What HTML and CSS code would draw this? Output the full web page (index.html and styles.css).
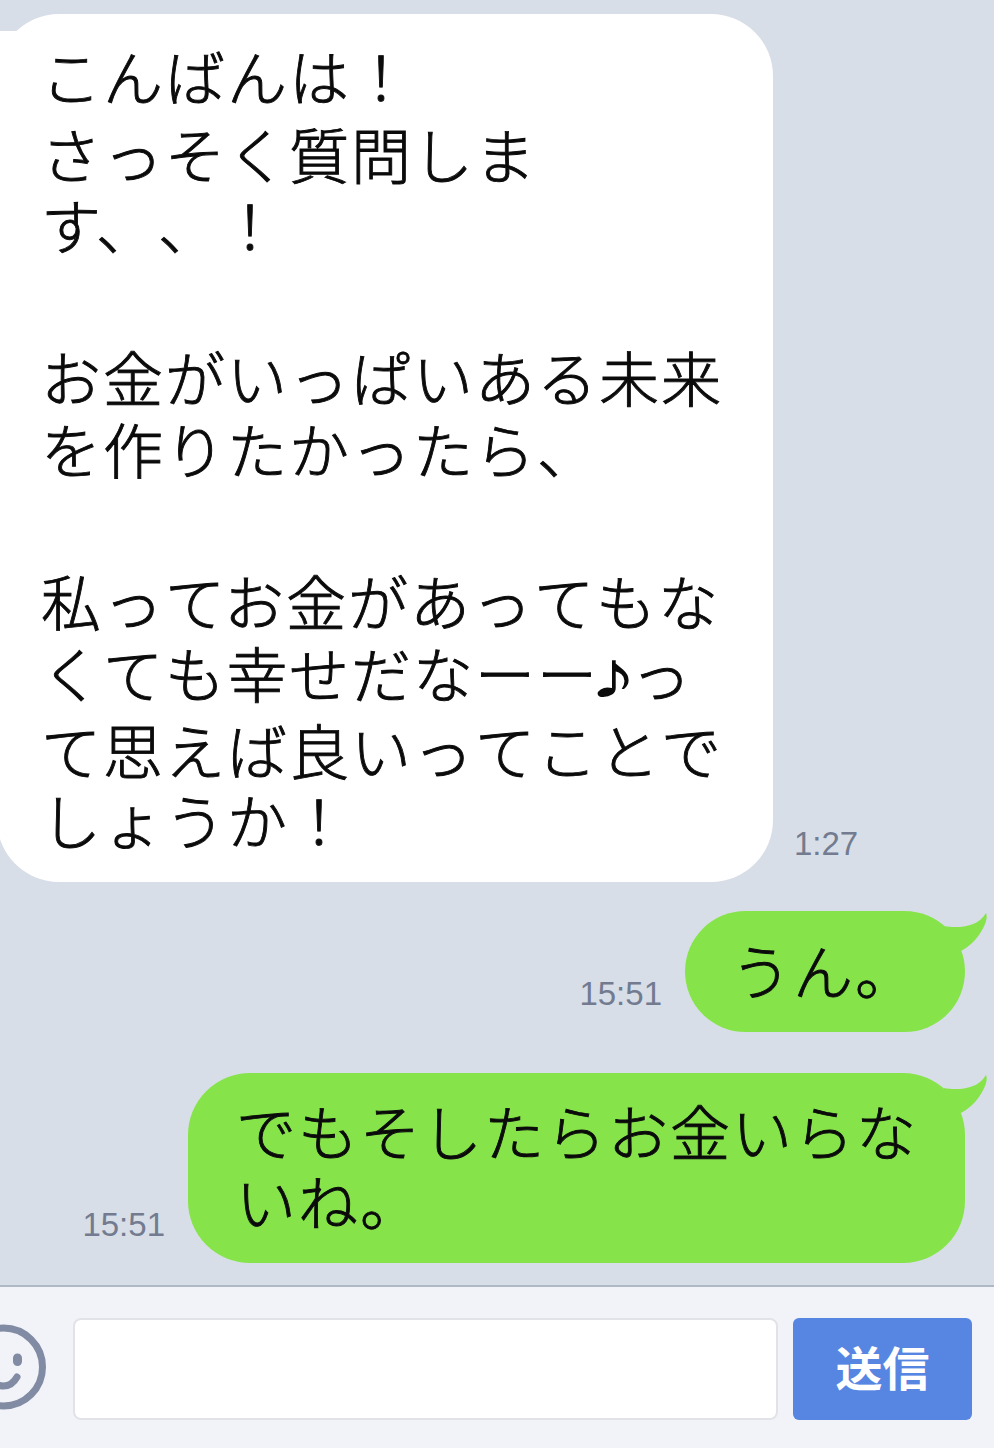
FILE: index.html
```html
<!DOCTYPE html>
<html lang="ja">
<head>
    <meta charset="UTF-8">
    <title>トーク</title>
    <link rel="stylesheet" href="styles.css">
</head>
<body>
<div class="box">
    <div class="talk">
        <div class="row other">
            <div class="bubble white">
                <p>こんばんは！</p>
                <p class="kanji">さっそく質問しま</p>
                <p>す<span class="mark">、、！</span></p>
                <p class="blank"></p>
                <p class="kanji">お金がいっぱいある未来</p>
                <p>を作りたかったら、</p>
                <p class="blank"></p>
                <p class="kanji">私って<span class="near">お金があってもな</span></p>
                <p>くても幸せだなーー<span class="note">♪</span>っ</p>
                <p class="kanji">て思えば良いってことで</p>
                <p class="last">しょうか！</p>
                <svg class="tail-left" width="20" height="60" viewBox="0 0 20 60">
                    <path d="M0 17H17V56H0Z" fill="#fff"/>
                </svg>
            </div>
            <span class="time">1:27</span>
        </div>
        <div class="row mine first">
            <span class="time">15:51</span>
            <div class="bubble green short">
                <p>うん。</p>
                <svg class="tail" width="50" height="46" viewBox="0 0 50 46">
                    <path d="M4 15C14 17 37 18 46 2Q49 9 39 24Q32 34 21 40L6 34Z" fill="#86e44a"/>
                </svg>
            </div>
        </div>
        <div class="row mine second">
            <span class="time">15:51</span>
            <div class="bubble green long">
                <p>でもそしたらお金いらな</p>
                <p>いね。</p>
                <svg class="tail" width="50" height="46" viewBox="0 0 50 46">
                    <path d="M4 15C14 17 37 18 46 2Q49 9 39 24Q32 34 21 40L6 34Z" fill="#86e44a"/>
                </svg>
            </div>
        </div>
    </div>
    <div class="bar">
        <svg class="smile" width="46" height="88" viewBox="0 0 46 88" fill="none" stroke="#828ba4" stroke-linecap="round">
            <circle cx="3.5" cy="44" r="39" stroke-width="7"/>
            <path d="M17.5 35V38.500" stroke-width="9"/>
            <path d="M-10 54Q-6 63 3.500 63Q12 63 17 54" stroke-width="7"/>
        </svg>
        <input class="text" type="text">
        <button class="send">送信</button>
    </div>
</div>
</body>
</html>
```
FILE: styles.css
```css
* {
    margin: 0;
    padding: 0;
    box-sizing: border-box;
}

body {
    background-color: #fff;
    font-family: "Liberation Sans", "Noto Sans CJK JP", sans-serif;
}

.box {
    width: 994px;
    height: 1448px;
    overflow: hidden;
    display: flex;
    flex-direction: column;
}

.talk {
    height: 1285px;
    padding-top: 14px;
    background-color: #d8dee7;
}

.row {
    display: flex;
    align-items: flex-end;
}

.bubble {
    position: relative;
    border-radius: 62px;
    color: #0b0b0b;
    font-family: "Noto Sans CJK JP", sans-serif;
    font-size: 60px;
    font-weight: 300;
    font-kerning: none;
    letter-spacing: 2px;
    white-space: nowrap;
    text-spacing-trim: space-all;
    -webkit-text-stroke: 0.9px #0b0b0b;
}

.white {
    width: 776px;
    height: 868px;
    margin-left: -3px;
    padding: 27px 0 0 44px;
    background-color: #fff;
}

.white p {
    height: 74.6px;
    line-height: 68px;
}

.white .kanji {
    line-height: 74px;
}

.white .last {
    line-height: 64px;
}

.green {
    background-color: #86e44a;
}

.green p {
    height: 70px;
    line-height: 70px;
}

.mark {
    margin-left: -7px;
}

.near {
    margin-left: -3px;
}

.note {
    display: inline-block;
    width: 32px;
    font-family: "DejaVu Sans", sans-serif;
    font-size: 67px;
    line-height: 54px;
    letter-spacing: 0;
    transform: scaleX(1.5);
    transform-origin: 22px 50%;
    -webkit-text-stroke: 0;
}

.tail-left {
    position: absolute;
    left: 3px;
    top: 0;
}

.tail {
    position: absolute;
    right: -25px;
    top: 0;
}

.time {
    color: #727b8f;
    font-size: 33px;
    line-height: 36px;
}

.other .time {
    margin: 0 0 20px 21px;
}

.mine {
    justify-content: flex-end;
    padding-right: 29px;
}

.mine .time {
    margin: 0 23px 20px 0;
}

.first {
    margin-top: 29px;
}

.second {
    margin-top: 41px;
}

.short {
    width: 280px;
    height: 121px;
    padding: 23px 0 0 46px;
}

.long {
    width: 777px;
    height: 190px;
    padding: 22px 0 0 48px;
}

.bar {
    flex: 1;
    display: flex;
    align-items: flex-start;
    padding-top: 31px;
    background-color: #f2f3f8;
    border-top: 2px solid #afb8c5;
}

.smile {
    margin-top: 5px;
}

.text {
    width: 705px;
    height: 102px;
    margin-left: 27px;
    border: 2px solid #e2e3e9;
    border-radius: 8px;
    background-color: #fff;
}

.send {
    width: 179px;
    height: 102px;
    margin-left: 15px;
    padding-bottom: 8px;
    border: none;
    border-radius: 6px;
    background-color: #5785e2;
    color: #fff;
    font-family: "Noto Sans CJK JP", sans-serif;
    font-size: 47px;
    font-weight: bold;
}
```
